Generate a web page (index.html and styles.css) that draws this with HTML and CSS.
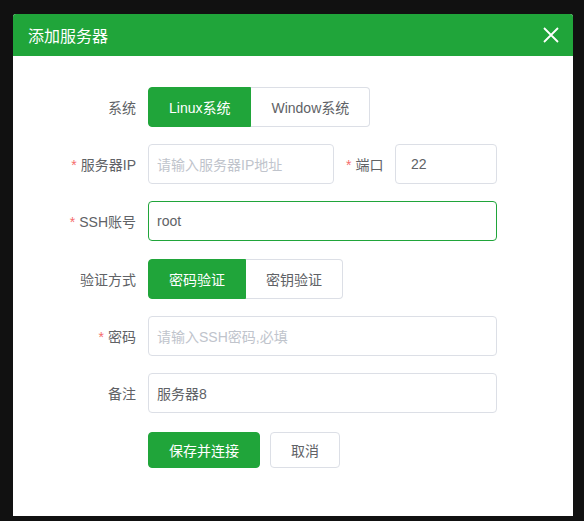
FILE: index.html
```html
<!DOCTYPE html>
<html lang="zh-CN">
<head>
<meta charset="utf-8">
<title>添加服务器</title>
<link rel="stylesheet" href="styles.css">
</head>
<body>
<div class="dialog">
  <div class="dialog-header">
    <span class="dialog-title">添加服务器</span>
    <span class="dialog-close">
      <svg width="16" height="16" viewBox="0 0 16 16"><path d="M1 1 L15 15 M15 1 L1 15" stroke="#fff" stroke-width="1.8" fill="none"/></svg>
    </span>
  </div>
  <div class="form">
    <div class="row">
      <label class="label">系统</label>
      <div class="btn-group">
        <span class="seg seg-active">Linux系统</span>
        <span class="seg">Window系统</span>
      </div>
    </div>
    <div class="row">
      <label class="label required">服务器IP</label>
      <div class="input input-ip placeholder">请输入服务器IP地址</div>
      <label class="label-inline required">端口</label>
      <div class="input input-port">22</div>
    </div>
    <div class="row">
      <label class="label required">SSH账号</label>
      <div class="input input-wide focused">root</div>
    </div>
    <div class="row row-shift1">
      <label class="label">验证方式</label>
      <div class="btn-group">
        <span class="seg seg-active">密码验证</span>
        <span class="seg">密钥验证</span>
      </div>
    </div>
    <div class="row">
      <label class="label required">密码</label>
      <div class="input input-wide placeholder">请输入SSH密码,必填</div>
    </div>
    <div class="row">
      <label class="label">备注</label>
      <div class="input input-wide">服务器8</div>
    </div>
    <div class="row row-actions">
      <span class="label"></span>
      <span class="btn btn-primary">保存并连接</span>
      <span class="btn btn-default">取消</span>
    </div>
  </div>
</div>
</body>
</html>
```
FILE: styles.css
```css
html, body {
  margin: 0;
  padding: 0;
  background: #111111;
  font-family: "Liberation Sans", "Noto Sans CJK SC", sans-serif;
}
body {
  padding: 14px 0 0 13px;
  height: 521px;
  box-sizing: border-box;
  overflow: hidden;
}
.dialog {
  width: 560px;
  height: 502px;
  background: #ffffff;
  border-radius: 3px 3px 0 0;
  overflow: hidden;
}
.dialog-header {
  height: 42px;
  background: #20a53a;
  display: flex;
  align-items: center;
  justify-content: space-between;
  padding: 0 14px 0 15px;
}
.dialog-title {
  color: #ffffff;
  font-size: 16px;
}
.dialog-close {
  display: flex;
  width: 16px;
  height: 16px;
}
.form {
  display: flex;
  flex-direction: column;
  padding-top: 31px;
}
.row {
  display: flex;
  align-items: center;
  height: 40px;
  margin-bottom: 17px;
}
.row-shift1 {
  margin-top: 1px;
}
.row-actions {
  height: 36px;
  margin-top: 2px;
}
.label {
  width: 123px;
  margin-right: 12px;
  text-align: right;
  font-size: 14px;
  color: #606266;
  flex-shrink: 0;
}
.label-inline {
  width: 37px;
  margin: 0 12px;
  font-size: 14px;
  color: #606266;
  white-space: nowrap;
}
.required::before {
  content: "*";
  color: #f56c6c;
  margin-right: 4px;
}
.btn-group {
  display: flex;
  height: 40px;
}
.seg {
  display: flex;
  align-items: center;
  padding: 0 20px;
  border: 1px solid #dcdfe6;
  font-size: 14px;
  color: #606266;
  background: #fff;
}
.seg:first-child {
  border-radius: 4px 0 0 4px;
}
.seg:last-child {
  border-left: none;
  border-radius: 0 4px 4px 0;
}
.seg-active {
  background: #20a53a;
  border-color: #20a53a;
  color: #ffffff;
}
.input {
  box-sizing: border-box;
  height: 40px;
  display: flex;
  align-items: center;
  border: 1px solid #dcdfe6;
  border-radius: 4px;
  padding: 0 8px;
  font-size: 14px;
  color: #606266;
}
.placeholder {
  color: #c0c4cc;
}
.focused {
  border-color: #20a53a;
}
.input-ip {
  width: 186px;
}
.input-port {
  width: 102px;
  padding-left: 15px;
}
.input-wide {
  width: 349px;
}
.btn {
  box-sizing: border-box;
  height: 36px;
  display: flex;
  align-items: center;
  padding: 0 20px;
  border: 1px solid #dcdfe6;
  border-radius: 4px;
  font-size: 14px;
}
.btn-primary {
  background: #20a53a;
  border-color: #20a53a;
  color: #ffffff;
  margin-right: 10px;
}
.btn-default {
  background: #ffffff;
  color: #606266;
}
```
